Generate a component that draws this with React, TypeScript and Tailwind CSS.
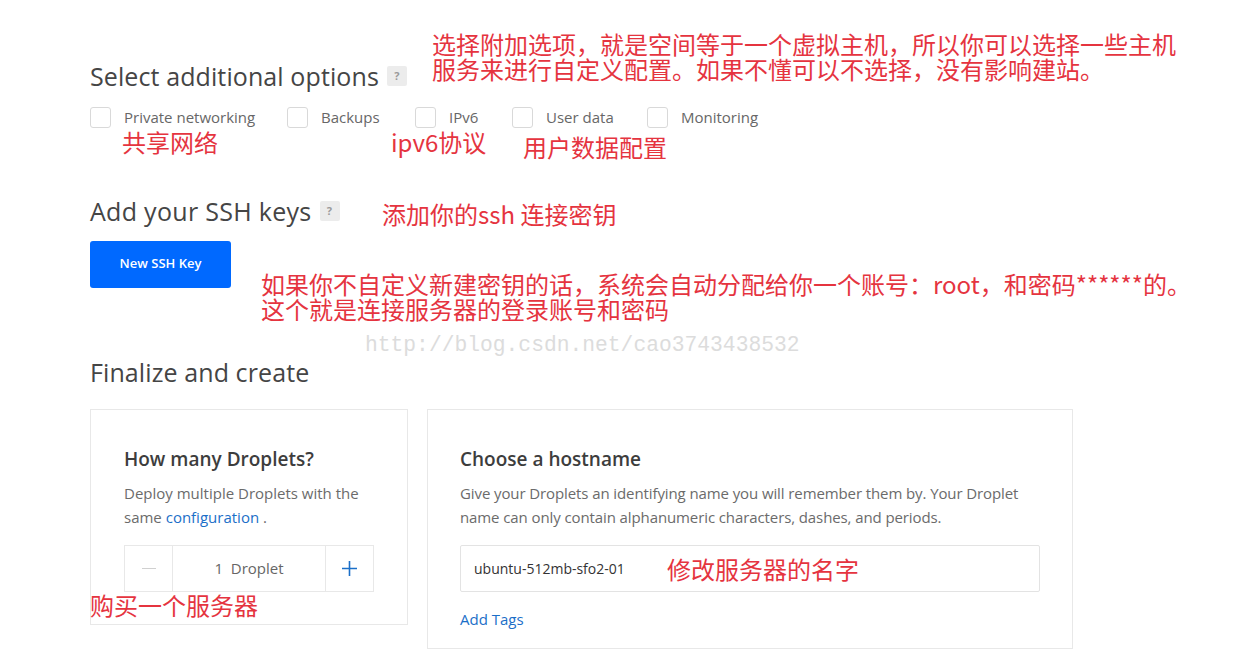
import React from "react";

const Badge = () => (
  <span className="ml-[8px] inline-flex h-[20px] w-[20px] items-center justify-center rounded-[2px] bg-[#ececec] text-[11px] font-bold text-[#9a9a9a]">?</span>
);

const Check = ({ label, className = "" }: { label: string; className?: string }) => (
  <div className={"flex items-center " + className}>
    <span className="h-[21px] w-[21px] rounded-[3px] border border-[#d9d9d9] bg-white" />
    <span className="ml-[13px] text-[15px] text-[#676767]">{label}</span>
  </div>
);

const Red = ({ children, className = "" }: { children: React.ReactNode; className?: string }) => (
  <div
    className={"absolute whitespace-nowrap text-[24px] leading-[25px] text-[#e5343f] " + className}
    style={{ fontFamily: '"Noto Sans CJK SC", "Noto Sans", sans-serif' }}
  >
    {children}
  </div>
);

export default function App() {
  return (
    <div
      className="relative h-[669px] w-[1247px] overflow-hidden bg-white text-[#444]"
      style={{ fontFamily: '"Open Sans", "Noto Sans", sans-serif' }}
    >
      <div className="pl-[90px] pt-[60px]">
        <h2 className="flex items-center text-[25px] leading-[32px] tracking-[0.1px] text-[#454545]">
          Select additional options <Badge />
        </h2>
        <div className="mt-[14px] flex items-center">
          <Check label="Private networking" className="w-[197px]" />
          <Check label="Backups" className="w-[128px]" />
          <Check label="IPv6" className="w-[97px]" />
          <Check label="User data" className="w-[135px]" />
          <Check label="Monitoring" />
        </div>

        <h2 className="mt-[66px] flex items-center text-[25px] leading-[32px] tracking-[0.3px] text-[#454545]">
          Add your SSH keys <Badge />
        </h2>
        <button className="mt-[14px] flex h-[47px] w-[141px] items-center justify-center rounded-[3px] bg-[#0069ff] text-[13px] font-semibold text-white">
          New SSH Key
        </button>

        <h2 className="mt-[68px] text-[25px] leading-[32px] tracking-[0.1px] text-[#454545]">Finalize and create</h2>

        <div className="mt-[21px] flex items-start gap-[19px]">
          <div className="h-[216px] w-[318px] border border-[#e8e8e8] pl-[33px] pt-[36px]">
            <h3 className="text-[19px] font-semibold leading-[26px] text-[#3d3d3d]">How many Droplets?</h3>
            <p className="mt-[9px] text-[15px] leading-[24px] text-[#6b6b6b]">
              Deploy multiple Droplets with the
              <br />
              same <span className="text-[#1b6fc8]">configuration</span> .
            </p>
            <div className="mt-[16px] flex h-[47px] w-[250px] border border-[#e8e8e8] text-[#666]">
              <div className="flex w-[48px] items-center justify-center border-r border-[#e8e8e8]">
                <span className="h-[1px] w-[14px] bg-[#d0d0d0]" />
              </div>
              <div className="flex flex-1 items-center justify-center text-[15px]">1&nbsp; Droplet</div>
              <div className="flex w-[48px] items-center justify-center border-l border-[#e8e8e8]">
                <svg width="15" height="15" viewBox="0 0 15 15">
                  <path d="M7.5 0v15M0 7.5h15" stroke="#1b6fc8" strokeWidth="1.6" />
                </svg>
              </div>
            </div>
          </div>
          <div className="h-[240px] w-[646px] border border-[#e8e8e8] pl-[32px] pt-[36px]">
            <h3 className="text-[19px] font-semibold leading-[26px] text-[#3d3d3d]">Choose a hostname</h3>
            <p className="mt-[9px] text-[15px] leading-[24px] tracking-[-0.1px] text-[#6b6b6b]">
              Give your Droplets an identifying name you will remember them by. Your Droplet
              <br />
              name can only contain alphanumeric characters, dashes, and periods.
            </p>
            <div className="mt-[16px] flex h-[47px] w-[580px] items-center rounded-[2px] border border-[#e3e3e3] pl-[13px] text-[14px] text-[#333]">
              ubuntu-512mb-sfo2-01
            </div>
            <div className="mt-[16px] text-[15px] text-[#1b6fc8]">Add Tags</div>
          </div>
        </div>
      </div>

      {/* annotations */}
      <Red className="left-[432px] top-[31px]">
        选择附加选项，就是空间等于一个虚拟主机，所以你可以选择一些主机
        <br />
        服务来进行自定义配置。如果不懂可以不选择，没有影响建站。
      </Red>
      <Red className="left-[122px] top-[129px]">共享网络</Red>
      <Red className="left-[391px] top-[129px]">ipv6协议</Red>
      <Red className="left-[523px] top-[134px]">用户数据配置</Red>
      <Red className="left-[382px] top-[201px]">添加你的ssh 连接密钥</Red>
      <Red className="left-[261px] top-[271px]">
        如果你不自定义新建密钥的话，系统会自动分配给你一个账号：root，和密码******的。
        <br />
        这个就是连接服务器的登录账号和密码
      </Red>
      <div
        className="absolute left-[365px] top-[333px] text-[21.3px] leading-[24px] text-[#dcdcdc]"
        style={{ fontFamily: '"Liberation Mono", monospace' }}
      >
        http://blog.csdn.net/cao3743438532
      </div>
      <Red className="left-[90px] top-[592px]">购买一个服务器</Red>
      <Red className="left-[667px] top-[556px]">修改服务器的名字</Red>
    </div>
  );
}
